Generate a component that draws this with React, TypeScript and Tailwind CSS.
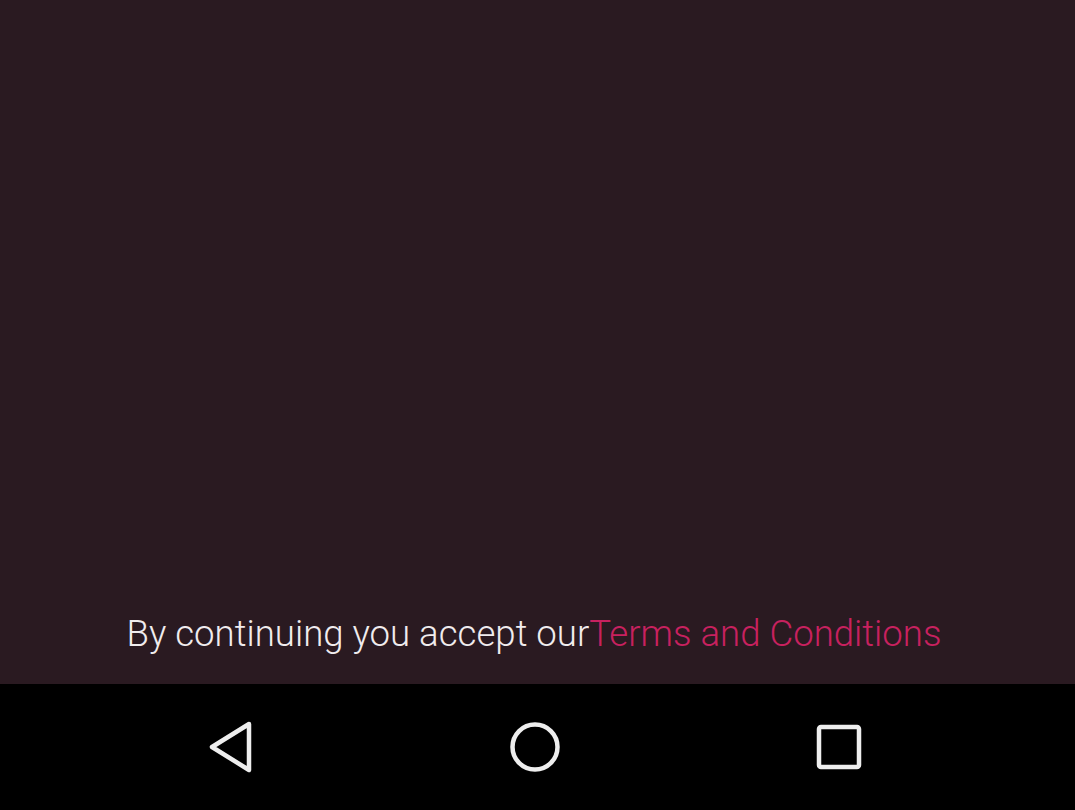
import React from "react";

export default function App() {
  return (
    <div className="flex h-[810px] w-[1075px] flex-col bg-black" style={{ fontFamily: "Roboto, 'Noto Sans', sans-serif" }}>
      <div className="flex flex-1 flex-col justify-end bg-[#2a1a21] pb-[28px]">
        <p className="pr-[7px] text-center text-[36.6px] leading-[44px] font-light text-[#f0ecee]">
          By continuing you accept our<span className="text-[#c8215f]">Terms and Conditions</span>
        </p>
      </div>
      <div className="flex h-[126px] items-center justify-center bg-black pr-[5px]">
        <div className="flex items-center gap-[255px]">
          <svg width="46" height="52" viewBox="0 0 46 52" className="block">
            <path d="M41 3 L4 26 L41 49 Z" fill="none" stroke="#eeeeee" strokeWidth="4.5" strokeLinejoin="round" />
          </svg>
          <svg width="52" height="52" viewBox="0 0 52 52" className="block">
            <circle cx="26" cy="26" r="22.5" fill="none" stroke="#eeeeee" strokeWidth="4.5" />
          </svg>
          <svg width="46" height="46" viewBox="0 0 46 46" className="block">
            <rect x="3" y="3" width="40" height="40" rx="2" fill="none" stroke="#eeeeee" strokeWidth="4.5" />
          </svg>
        </div>
      </div>
    </div>
  );
}
